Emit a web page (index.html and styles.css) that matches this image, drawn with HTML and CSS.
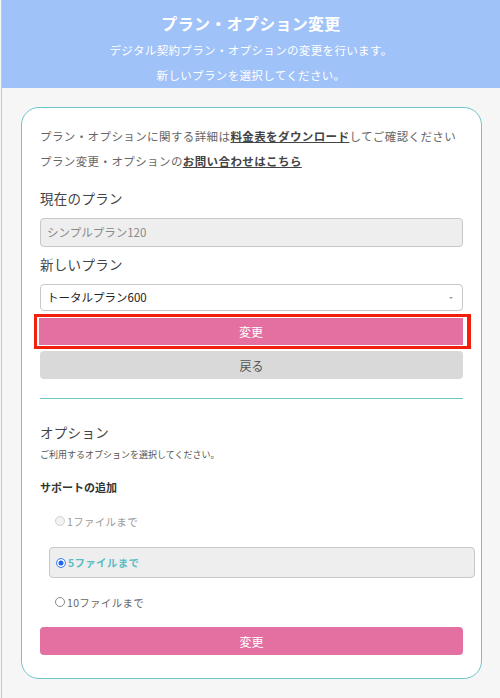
FILE: index.html
```html
<!DOCTYPE html>
<html lang="ja">
<head>
    <meta charset="UTF-8">
    <meta name="viewport" content="width=device-width, initial-scale=1.0">
    <title>プラン・オプション変更</title>
    <link rel="stylesheet" href="styles.css">
</head>
<body>
    <div class="page">
        <header class="page-head">
            <h1 class="page-title">プラン・オプション変更</h1>
            <p class="page-lead">デジタル契約プラン・オプションの変更を行います。</p>
            <p class="page-lead">新しいプランを選択してください。</p>
        </header>

        <section class="card">
            <p class="note">プラン・オプションに関する詳細は<a class="link">料金表をダウンロード</a>してご確認ください</p>
            <p class="note">プラン変更・オプションの<a class="link">お問い合わせはこちら</a></p>

            <h2 class="label label-first">現在のプラン</h2>
            <div class="field field-disabled">シンプルプラン120</div>

            <h2 class="label">新しいプラン</h2>
            <div class="field field-select">
                <span>トータルプラン600</span>
                <span class="select-arrow"></span>
            </div>

            <div class="highlight">
                <button class="btn btn-pink">変更</button>
            </div>
            <button class="btn btn-gray">戻る</button>

            <hr class="divider">

            <h2 class="label label-option">オプション</h2>
            <p class="hint">ご利用するオプションを選択してください。</p>
            <h3 class="sub-label">サポートの追加</h3>

            <ul class="radio-list">
                <li class="radio-row is-disabled"><span class="radio"></span>1ファイルまで</li>
                <li class="radio-row is-checked"><span class="radio"></span>5ファイルまで</li>
                <li class="radio-row"><span class="radio"></span>10ファイルまで</li>
            </ul>

            <button class="btn btn-pink btn-last">変更</button>
        </section>
    </div>
</body>
</html>
```

FILE: styles.css
```css
* {
    box-sizing: border-box;
}
html,
body {
    margin: 0;
    padding: 0;
}
body {
    background: #f6f6f6;
    font-family: "Noto Sans CJK JP", "Noto Sans", sans-serif;
    color: #666;
}
h1, h2, h3, p, ul {
    margin: 0;
    padding: 0;
    list-style: none;
}
.page {
    margin-left: 1px;
    min-height: 698px;
    border-left: 1px solid #c9c9c9;
    overflow: hidden;
}

/* header */
.page-head {
    height: 88px;
    padding-top: 12px;
    background: #9fc2f8;
    color: #fff;
    text-align: center;
}
.page-title {
    font-size: 16px;
    line-height: 22px;
    font-weight: bold;
    margin-bottom: 4px;
    letter-spacing: 0.3px;
}
.page-lead {
    font-size: 11.5px;
    line-height: 25px;
    letter-spacing: 0.35px;
}

/* card */
.card {
    margin: 19px 18px 0 19px;
    padding: 16px 18px 23px 18px;
    background: #fff;
    border: 1px solid #6fc4c9;
    border-radius: 18px;
}
.note {
    font-size: 11.5px;
    line-height: 25px;
    color: #666;
    white-space: nowrap;
    letter-spacing: 0.4px;
}
.link {
    color: #444;
    font-weight: bold;
    text-decoration: underline;
    cursor: pointer;
}
.label {
    font-size: 13.5px;
    line-height: 20px;
    font-weight: normal;
    color: #444;
    margin-top: 7px;
    letter-spacing: 0.3px;
}
.label-first {
    margin-top: 14px;
}
.field {
    margin-top: 10px;
    height: 29px;
    padding: 0 6px;
    border: 1px solid #c8c8c8;
    border-radius: 4px;
    font-size: 11.5px;
    line-height: 27px;
}
.field-disabled {
    background: #eeeeee;
    color: #888;
}
.field-select {
    height: 27px;
    line-height: 25px;
    background: #fff;
    color: #222;
    display: flex;
    justify-content: space-between;
    align-items: center;
}
.select-arrow {
    width: 0;
    height: 0;
    margin-right: 3px;
    border-left: 2px solid transparent;
    border-right: 2px solid transparent;
    border-top: 2px solid #999;
}

/* buttons */
.btn {
    display: block;
    width: 100%;
    height: 28px;
    border: 0;
    border-radius: 4px;
    font-family: inherit;
    font-size: 12px;
    cursor: pointer;
}
.btn-pink {
    background: #e370a0;
    color: #fff;
}
.btn-gray {
    margin-top: 2px;
    background: #d9d9d9;
    color: #555;
}
.highlight {
    margin: 3px -8px 0 -6px;
    padding: 1px 4px 1px 2px;
    border: 3px solid #f21f0c;
    border-right-width: 4px;
    background: #fff;
}
.highlight .btn {
    height: 27px;
    border-radius: 0;
}
.divider {
    margin: 19px 0 0 0;
    border: 0;
    height: 1px;
    background: #6fc4c9;
}
.label-option {
    margin-top: 23px;
}
.hint {
    margin-top: 6px;
    font-size: 9px;
    line-height: 14px;
    color: #555;
}
.sub-label {
    margin-top: 17px;
    font-size: 11px;
    line-height: 16px;
    font-weight: bold;
    color: #333;
}

/* radios */
.radio-list {
    margin-top: 16px;
}
.radio-row {
    display: flex;
    align-items: center;
    height: 20px;
    padding-left: 15px;
    font-size: 10.5px;
    color: #666;
    letter-spacing: 0.3px;
}
.radio-row + .radio-row {
    margin-top: 16px;
}
.radio-row.is-checked + .radio-row {
    margin-top: 14px;
}
.radio {
    width: 10px;
    height: 10px;
    margin-right: 2px;
    border: 1px solid #8a8a8a;
    border-radius: 50%;
    background: #fff;
}
.radio-row.is-disabled {
    color: #999;
}
.radio-row.is-disabled .radio {
    border-color: #d0d0d0;
    background: #f2f2f2;
}
.radio-row.is-checked {
    height: 31px;
    margin-left: 9px;
    margin-right: -12px;
    padding-left: 6px;
    background: #eeeeee;
    border: 1px solid #c8c8c8;
    border-radius: 4px;
    color: #5cbcc2;
    font-weight: bold;
}
.radio-row.is-checked .radio {
    border-color: #5a8cf5;
    background: #1f66f2;
    box-shadow: inset 0 0 0 1.5px #fff;
}
.btn-last {
    margin-top: 15px;
}
```
